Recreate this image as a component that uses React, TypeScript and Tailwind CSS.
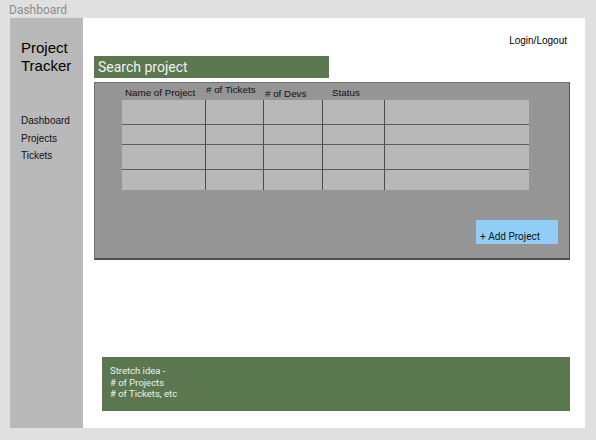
const columns = [84, 58, 59, 62, 144];
const rows = [25, 20, 25, 20];

function Grid() {
  return (
    <div className="flex flex-col w-[407px] bg-[#b8b8b8]">
      {rows.map((h, r) => (
        <div
          key={r}
          className={`flex ${r < rows.length - 1 ? "border-b border-[#5a5a5a]" : ""}`}
          style={{ height: h }}
        >
          {columns.map((w, c) => (
            <div
              key={c}
              className={c < columns.length - 1 ? "border-r border-[#4a4a4a]" : ""}
              style={{ width: w }}
            ></div>
          ))}
        </div>
      ))}
    </div>
  );
}

export default function App() {
  return (
    <div className="w-[596px] h-[440px] bg-[#e0e0e0] font-['Liberation_Sans',Arial,sans-serif] overflow-hidden">
      <div className="h-[18px] pl-[9px] text-[12px] leading-[20px] text-[#8c8c8c] font-['Roboto',sans-serif]">
        Dashboard
      </div>
      <div className="flex ml-[10px] w-[575px] h-[410px]">
        {/* sidebar */}
        <div className="w-[73px] bg-[#b9b9b9] pl-[11px] pt-[21px]">
          <div className="text-[15px] leading-[17.5px] text-black">
            Project
            <br />
            Tracker
          </div>
          <div className="mt-[38px] flex flex-col text-[10px] leading-[17.5px] text-[#111]">
            <span>Dashboard</span>
            <span>Projects</span>
            <span>Tickets</span>
          </div>
        </div>

        {/* main */}
        <div className="flex-1 bg-white pl-[11px]">
          <div className="flex justify-end pr-[18px] pt-[16px] text-[10px] leading-[14px] text-black">
            Login/Logout
          </div>
          <div className="mt-[8px] w-[235px] h-[22px] bg-[#5b774f] pl-[4px] text-[14px] leading-[22px] text-[#f2f2f2] font-['Roboto',sans-serif]">
            Search project
          </div>
          <div className="mt-[4px] w-[476px] h-[178px] bg-[#959595] border border-[#707070] border-r-[#505050] border-b-[#505050] border-b-2">
            <div className="relative h-[17px] text-[9.8px] text-[#111]">
              <span className="absolute left-[30px] top-[3px]">Name of Project</span>
              <span className="absolute left-[111px] top-0">
                # of Tickets
              </span>
              <span className="absolute left-[170px] top-[4px]">
                # of Devs
              </span>
              <span className="absolute left-[237px] top-[3px]">Status</span>
            </div>
            <div className="pl-[27px]">
              <Grid />
            </div>
            <div className="flex justify-end pr-[11px] mt-[30px]">
              <div className="w-[82px] h-[24px] bg-[#90cef8] pl-[4px] pt-[10px] text-[10px] leading-[14px] text-[#111] font-['Roboto',sans-serif]">
                + Add Project
              </div>
            </div>
          </div>
          <div className="mt-[97px] ml-[8px] w-[468px] h-[54px] bg-[#5b774f] pl-[8px] pt-[8px] text-[9.5px] leading-[11.5px] text-[#eef2ec] font-['Roboto',sans-serif]">
            Stretch idea -
            <br /># of Projects
            <br /># of Tickets, etc
          </div>
        </div>
      </div>
    </div>
  );
}
